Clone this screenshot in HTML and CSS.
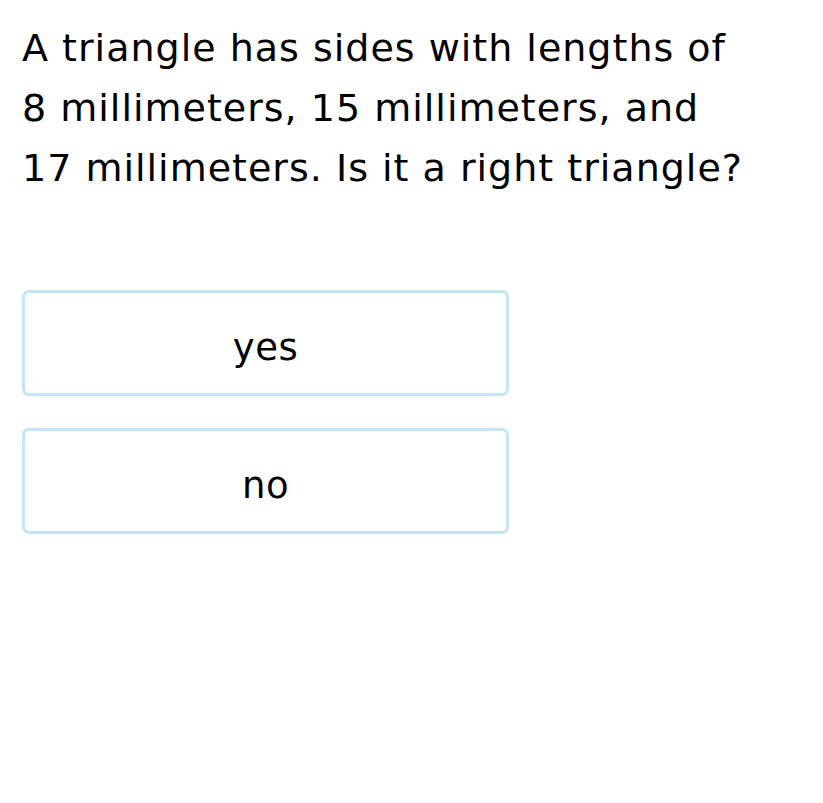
FILE: index.html
```html
<!DOCTYPE html>
<html>
<head>
<meta charset="utf-8">
<link rel="stylesheet" href="styles.css">
</head>
<body>
<div class="page">
  <p class="question">A triangle has sides with lengths of<br>8 millimeters, 15 millimeters, and<br>17 millimeters. Is it a right triangle?</p>
  <div class="choices">
    <div class="choice">yes</div>
    <div class="choice">no</div>
  </div>
</div>
</body>
</html>
```
FILE: styles.css
```css
html, body {
  margin: 0;
  padding: 0;
  background: #ffffff;
}
.page {
  padding: 18px 0 0 22px;
  font-family: "DejaVu Sans", Verdana, sans-serif;
  color: #000000;
}
.question {
  margin: 0;
  font-size: 38px;
  line-height: 60px;
  letter-spacing: 1px;
}
.choices {
  margin-top: 92px;
  display: flex;
  flex-direction: column;
  gap: 32px;
  width: 487px;
}
.choice {
  box-sizing: border-box;
  height: 106px;
  padding-top: 8px;
  border: 3px solid #c4e6f4;
  border-radius: 7px;
  display: flex;
  align-items: center;
  justify-content: center;
  font-size: 37px;
  letter-spacing: 0.5px;
}
```
